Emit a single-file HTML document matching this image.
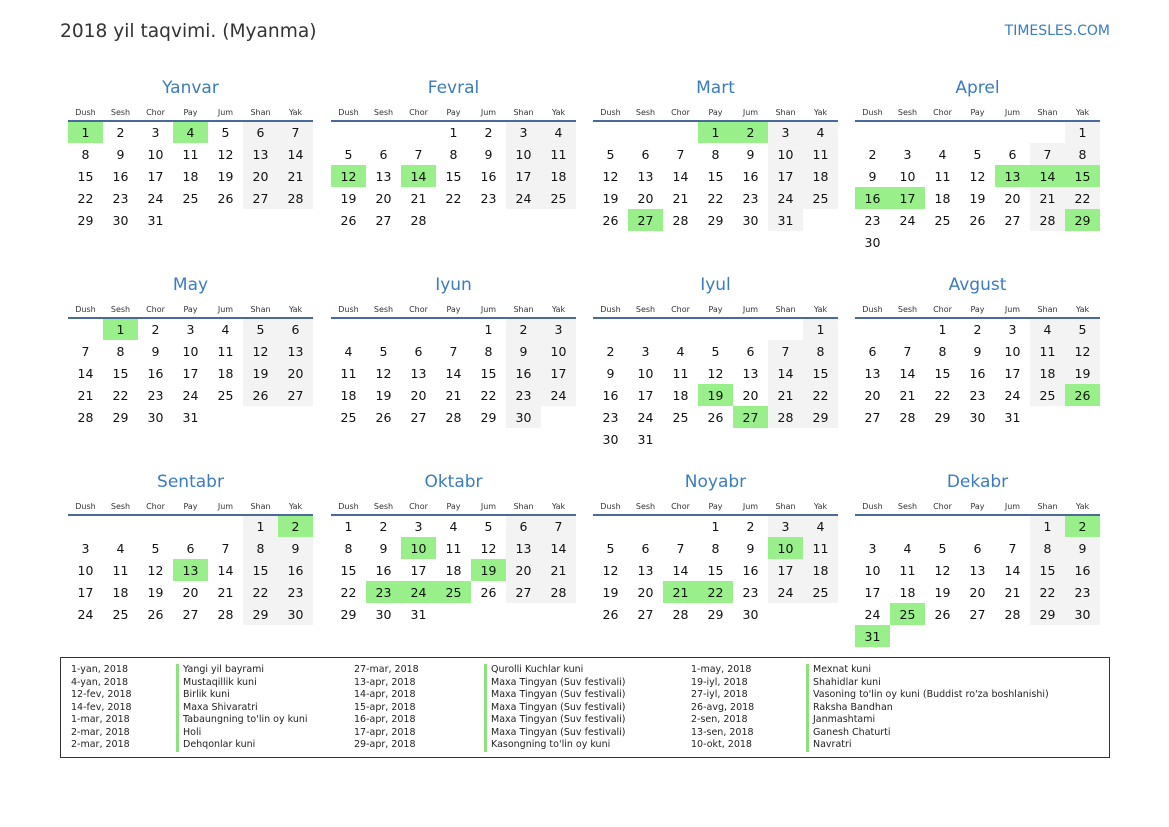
<!DOCTYPE html>
<html><head><meta charset="utf-8"><style>
*{margin:0;padding:0;box-sizing:border-box}
body{width:1169px;height:827px;background:#fff;font-family:"DejaVu Sans","Liberation Sans",sans-serif;color:#111;position:relative;overflow:hidden}
.t{position:absolute;left:60px;top:21px;font-size:18.6px;color:#333}
.s{position:absolute;right:59px;top:23px;font-size:14px;color:#3a7cc0}
.m{position:absolute;width:245px}
.m h2{font-weight:normal;font-size:17px;color:#3a7cc0;text-align:center;height:29px;line-height:26px}
table{border-collapse:collapse;width:245px;table-layout:fixed}
th{font-weight:normal;font-size:8px;color:#333;height:17px;vertical-align:middle;border-bottom:2px solid #4a6a9a}
td{height:22px;text-align:center;font-size:12.5px;padding:0}
tr.f td{border-top:2px solid #fff}
.g{background:#f3f3f3}.h{background:#99f08a}
.L{position:absolute;left:60px;top:657px;width:1050px;height:101px;border:1.5px solid #333;font-size:9.5px;color:#222}
.c{position:absolute;top:6px;line-height:12.5px}
.b{border-left:3px solid #8de27d;padding-left:4px}
</style></head><body>
<div class="t">2018 yil taqvimi. (Myanma)</div>
<div class="s">TIMESLES.COM</div>

<div class="m" style="left:68px;top:75px"><h2>Yanvar</h2><table><tr><th>Dush</th><th>Sesh</th><th>Chor</th><th>Pay</th><th>Jum</th><th>Shan</th><th>Yak</th></tr>
<tr class="f"><td class="h">1</td><td>2</td><td>3</td><td class="h">4</td><td>5</td><td class="g">6</td><td class="g">7</td></tr>
<tr><td>8</td><td>9</td><td>10</td><td>11</td><td>12</td><td class="g">13</td><td class="g">14</td></tr>
<tr><td>15</td><td>16</td><td>17</td><td>18</td><td>19</td><td class="g">20</td><td class="g">21</td></tr>
<tr><td>22</td><td>23</td><td>24</td><td>25</td><td>26</td><td class="g">27</td><td class="g">28</td></tr>
<tr><td>29</td><td>30</td><td>31</td><td></td><td></td><td></td><td></td></tr></table></div>

<div class="m" style="left:331px;top:75px"><h2>Fevral</h2><table><tr><th>Dush</th><th>Sesh</th><th>Chor</th><th>Pay</th><th>Jum</th><th>Shan</th><th>Yak</th></tr>
<tr class="f"><td></td><td></td><td></td><td>1</td><td>2</td><td class="g">3</td><td class="g">4</td></tr>
<tr><td>5</td><td>6</td><td>7</td><td>8</td><td>9</td><td class="g">10</td><td class="g">11</td></tr>
<tr><td class="h">12</td><td>13</td><td class="h">14</td><td>15</td><td>16</td><td class="g">17</td><td class="g">18</td></tr>
<tr><td>19</td><td>20</td><td>21</td><td>22</td><td>23</td><td class="g">24</td><td class="g">25</td></tr>
<tr><td>26</td><td>27</td><td>28</td><td></td><td></td><td></td><td></td></tr></table></div>

<div class="m" style="left:593px;top:75px"><h2>Mart</h2><table><tr><th>Dush</th><th>Sesh</th><th>Chor</th><th>Pay</th><th>Jum</th><th>Shan</th><th>Yak</th></tr>
<tr class="f"><td></td><td></td><td></td><td class="h">1</td><td class="h">2</td><td class="g">3</td><td class="g">4</td></tr>
<tr><td>5</td><td>6</td><td>7</td><td>8</td><td>9</td><td class="g">10</td><td class="g">11</td></tr>
<tr><td>12</td><td>13</td><td>14</td><td>15</td><td>16</td><td class="g">17</td><td class="g">18</td></tr>
<tr><td>19</td><td>20</td><td>21</td><td>22</td><td>23</td><td class="g">24</td><td class="g">25</td></tr>
<tr><td>26</td><td class="h">27</td><td>28</td><td>29</td><td>30</td><td class="g">31</td><td></td></tr></table></div>

<div class="m" style="left:855px;top:75px"><h2>Aprel</h2><table><tr><th>Dush</th><th>Sesh</th><th>Chor</th><th>Pay</th><th>Jum</th><th>Shan</th><th>Yak</th></tr>
<tr class="f"><td></td><td></td><td></td><td></td><td></td><td></td><td class="g">1</td></tr>
<tr><td>2</td><td>3</td><td>4</td><td>5</td><td>6</td><td class="g">7</td><td class="g">8</td></tr>
<tr><td>9</td><td>10</td><td>11</td><td>12</td><td class="h">13</td><td class="h">14</td><td class="h">15</td></tr>
<tr><td class="h">16</td><td class="h">17</td><td>18</td><td>19</td><td>20</td><td class="g">21</td><td class="g">22</td></tr>
<tr><td>23</td><td>24</td><td>25</td><td>26</td><td>27</td><td class="g">28</td><td class="h">29</td></tr>
<tr><td>30</td><td></td><td></td><td></td><td></td><td></td><td></td></tr></table></div>

<div class="m" style="left:68px;top:272px"><h2>May</h2><table><tr><th>Dush</th><th>Sesh</th><th>Chor</th><th>Pay</th><th>Jum</th><th>Shan</th><th>Yak</th></tr>
<tr class="f"><td></td><td class="h">1</td><td>2</td><td>3</td><td>4</td><td class="g">5</td><td class="g">6</td></tr>
<tr><td>7</td><td>8</td><td>9</td><td>10</td><td>11</td><td class="g">12</td><td class="g">13</td></tr>
<tr><td>14</td><td>15</td><td>16</td><td>17</td><td>18</td><td class="g">19</td><td class="g">20</td></tr>
<tr><td>21</td><td>22</td><td>23</td><td>24</td><td>25</td><td class="g">26</td><td class="g">27</td></tr>
<tr><td>28</td><td>29</td><td>30</td><td>31</td><td></td><td></td><td></td></tr></table></div>

<div class="m" style="left:331px;top:272px"><h2>Iyun</h2><table><tr><th>Dush</th><th>Sesh</th><th>Chor</th><th>Pay</th><th>Jum</th><th>Shan</th><th>Yak</th></tr>
<tr class="f"><td></td><td></td><td></td><td></td><td>1</td><td class="g">2</td><td class="g">3</td></tr>
<tr><td>4</td><td>5</td><td>6</td><td>7</td><td>8</td><td class="g">9</td><td class="g">10</td></tr>
<tr><td>11</td><td>12</td><td>13</td><td>14</td><td>15</td><td class="g">16</td><td class="g">17</td></tr>
<tr><td>18</td><td>19</td><td>20</td><td>21</td><td>22</td><td class="g">23</td><td class="g">24</td></tr>
<tr><td>25</td><td>26</td><td>27</td><td>28</td><td>29</td><td class="g">30</td><td></td></tr></table></div>

<div class="m" style="left:593px;top:272px"><h2>Iyul</h2><table><tr><th>Dush</th><th>Sesh</th><th>Chor</th><th>Pay</th><th>Jum</th><th>Shan</th><th>Yak</th></tr>
<tr class="f"><td></td><td></td><td></td><td></td><td></td><td></td><td class="g">1</td></tr>
<tr><td>2</td><td>3</td><td>4</td><td>5</td><td>6</td><td class="g">7</td><td class="g">8</td></tr>
<tr><td>9</td><td>10</td><td>11</td><td>12</td><td>13</td><td class="g">14</td><td class="g">15</td></tr>
<tr><td>16</td><td>17</td><td>18</td><td class="h">19</td><td>20</td><td class="g">21</td><td class="g">22</td></tr>
<tr><td>23</td><td>24</td><td>25</td><td>26</td><td class="h">27</td><td class="g">28</td><td class="g">29</td></tr>
<tr><td>30</td><td>31</td><td></td><td></td><td></td><td></td><td></td></tr></table></div>

<div class="m" style="left:855px;top:272px"><h2>Avgust</h2><table><tr><th>Dush</th><th>Sesh</th><th>Chor</th><th>Pay</th><th>Jum</th><th>Shan</th><th>Yak</th></tr>
<tr class="f"><td></td><td></td><td>1</td><td>2</td><td>3</td><td class="g">4</td><td class="g">5</td></tr>
<tr><td>6</td><td>7</td><td>8</td><td>9</td><td>10</td><td class="g">11</td><td class="g">12</td></tr>
<tr><td>13</td><td>14</td><td>15</td><td>16</td><td>17</td><td class="g">18</td><td class="g">19</td></tr>
<tr><td>20</td><td>21</td><td>22</td><td>23</td><td>24</td><td class="g">25</td><td class="h">26</td></tr>
<tr><td>27</td><td>28</td><td>29</td><td>30</td><td>31</td><td></td><td></td></tr></table></div>

<div class="m" style="left:68px;top:469px"><h2>Sentabr</h2><table><tr><th>Dush</th><th>Sesh</th><th>Chor</th><th>Pay</th><th>Jum</th><th>Shan</th><th>Yak</th></tr>
<tr class="f"><td></td><td></td><td></td><td></td><td></td><td class="g">1</td><td class="h">2</td></tr>
<tr><td>3</td><td>4</td><td>5</td><td>6</td><td>7</td><td class="g">8</td><td class="g">9</td></tr>
<tr><td>10</td><td>11</td><td>12</td><td class="h">13</td><td>14</td><td class="g">15</td><td class="g">16</td></tr>
<tr><td>17</td><td>18</td><td>19</td><td>20</td><td>21</td><td class="g">22</td><td class="g">23</td></tr>
<tr><td>24</td><td>25</td><td>26</td><td>27</td><td>28</td><td class="g">29</td><td class="g">30</td></tr></table></div>

<div class="m" style="left:331px;top:469px"><h2>Oktabr</h2><table><tr><th>Dush</th><th>Sesh</th><th>Chor</th><th>Pay</th><th>Jum</th><th>Shan</th><th>Yak</th></tr>
<tr class="f"><td>1</td><td>2</td><td>3</td><td>4</td><td>5</td><td class="g">6</td><td class="g">7</td></tr>
<tr><td>8</td><td>9</td><td class="h">10</td><td>11</td><td>12</td><td class="g">13</td><td class="g">14</td></tr>
<tr><td>15</td><td>16</td><td>17</td><td>18</td><td class="h">19</td><td class="g">20</td><td class="g">21</td></tr>
<tr><td>22</td><td class="h">23</td><td class="h">24</td><td class="h">25</td><td>26</td><td class="g">27</td><td class="g">28</td></tr>
<tr><td>29</td><td>30</td><td>31</td><td></td><td></td><td></td><td></td></tr></table></div>

<div class="m" style="left:593px;top:469px"><h2>Noyabr</h2><table><tr><th>Dush</th><th>Sesh</th><th>Chor</th><th>Pay</th><th>Jum</th><th>Shan</th><th>Yak</th></tr>
<tr class="f"><td></td><td></td><td></td><td>1</td><td>2</td><td class="g">3</td><td class="g">4</td></tr>
<tr><td>5</td><td>6</td><td>7</td><td>8</td><td>9</td><td class="h">10</td><td class="g">11</td></tr>
<tr><td>12</td><td>13</td><td>14</td><td>15</td><td>16</td><td class="g">17</td><td class="g">18</td></tr>
<tr><td>19</td><td>20</td><td class="h">21</td><td class="h">22</td><td>23</td><td class="g">24</td><td class="g">25</td></tr>
<tr><td>26</td><td>27</td><td>28</td><td>29</td><td>30</td><td></td><td></td></tr></table></div>

<div class="m" style="left:855px;top:469px"><h2>Dekabr</h2><table><tr><th>Dush</th><th>Sesh</th><th>Chor</th><th>Pay</th><th>Jum</th><th>Shan</th><th>Yak</th></tr>
<tr class="f"><td></td><td></td><td></td><td></td><td></td><td class="g">1</td><td class="h">2</td></tr>
<tr><td>3</td><td>4</td><td>5</td><td>6</td><td>7</td><td class="g">8</td><td class="g">9</td></tr>
<tr><td>10</td><td>11</td><td>12</td><td>13</td><td>14</td><td class="g">15</td><td class="g">16</td></tr>
<tr><td>17</td><td>18</td><td>19</td><td>20</td><td>21</td><td class="g">22</td><td class="g">23</td></tr>
<tr><td>24</td><td class="h">25</td><td>26</td><td>27</td><td>28</td><td class="g">29</td><td class="g">30</td></tr>
<tr><td class="h">31</td><td></td><td></td><td></td><td></td><td></td><td></td></tr></table></div>

<div class="L">
<div class="c" style="left:10px">1-yan, 2018<br>4-yan, 2018<br>12-fev, 2018<br>14-fev, 2018<br>1-mar, 2018<br>2-mar, 2018<br>2-mar, 2018</div>
<div class="c b" style="left:115px">Yangi yil bayrami<br>Mustaqillik kuni<br>Birlik kuni<br>Maxa Shivaratri<br>Tabaungning to'lin oy kuni<br>Holi<br>Dehqonlar kuni</div>
<div class="c" style="left:293px">27-mar, 2018<br>13-apr, 2018<br>14-apr, 2018<br>15-apr, 2018<br>16-apr, 2018<br>17-apr, 2018<br>29-apr, 2018</div>
<div class="c b" style="left:423px">Qurolli Kuchlar kuni<br>Maxa Tingyan (Suv festivali)<br>Maxa Tingyan (Suv festivali)<br>Maxa Tingyan (Suv festivali)<br>Maxa Tingyan (Suv festivali)<br>Maxa Tingyan (Suv festivali)<br>Kasongning to'lin oy kuni</div>
<div class="c" style="left:630px">1-may, 2018<br>19-iyl, 2018<br>27-iyl, 2018<br>26-avg, 2018<br>2-sen, 2018<br>13-sen, 2018<br>10-okt, 2018</div>
<div class="c b" style="left:745px">Mexnat kuni<br>Shahidlar kuni<br>Vasoning to'lin oy kuni (Buddist ro'za boshlanishi)<br>Raksha Bandhan<br>Janmashtami<br>Ganesh Chaturti<br>Navratri</div>
</div>
</body></html>
